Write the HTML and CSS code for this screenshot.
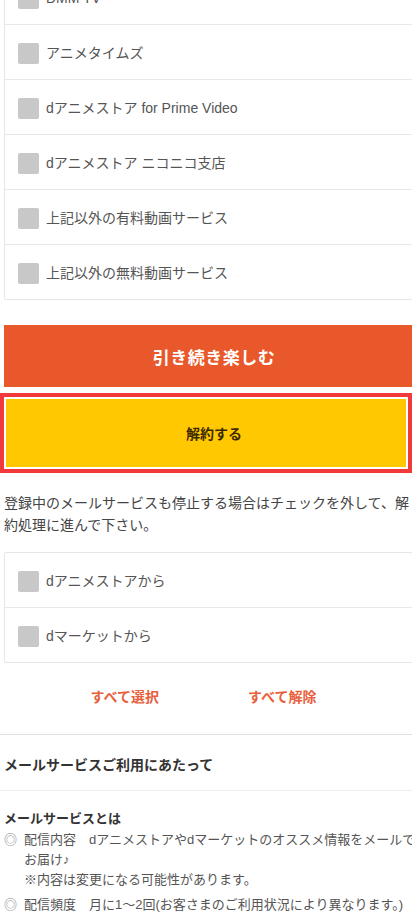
FILE: index.html
```html
<!DOCTYPE html>
<html lang="ja">
<head>
<meta charset="utf-8">
<meta name="viewport" content="width=device-width, initial-scale=1">
<title>解約</title>
<link rel="stylesheet" href="styles.css">
</head>
<body>
<div class="page">
  <ul class="checklist checklist-top">
    <li class="check-row"><span class="box"></span><span class="label">DMM TV</span></li>
    <li class="check-row"><span class="box"></span><span class="label">アニメタイムズ</span></li>
    <li class="check-row"><span class="box"></span><span class="label">dアニメストア for Prime Video</span></li>
    <li class="check-row"><span class="box"></span><span class="label">dアニメストア ニコニコ支店</span></li>
    <li class="check-row"><span class="box"></span><span class="label">上記以外の有料動画サービス</span></li>
    <li class="check-row"><span class="box"></span><span class="label">上記以外の無料動画サービス</span></li>
  </ul>

  <div class="actions">
    <button class="btn btn-continue" type="button">引き続き楽しむ</button>
    <div class="cancel-wrap">
      <button class="btn btn-cancel" type="button">解約する</button>
      <span class="highlight"></span>
    </div>
  </div>

  <p class="note">登録中のメールサービスも停止する場合はチェックを外して、解約処理に進んで下さい。</p>

  <ul class="checklist checklist-mail">
    <li class="check-row"><span class="box"></span><span class="label">dアニメストアから</span></li>
    <li class="check-row"><span class="box"></span><span class="label">dマーケットから</span></li>
  </ul>

  <div class="select-links">
    <a class="select-link" href="#">すべて選択</a>
    <a class="select-link" href="#">すべて解除</a>
  </div>

  <section class="mail-info">
    <h2 class="info-title">メールサービスご利用にあたって</h2>
    <div class="info-body">
      <h3 class="info-subtitle">メールサービスとは</h3>
      <ul class="info-list">
        <li class="info-item"><span class="mark">◎</span><div class="item-text"><span class="item-label">配信内容</span>dアニメストアやdマーケットのオススメ情報をメールでお届け♪<br>※内容は変更になる可能性があります。</div></li>
        <li class="info-item"><span class="mark">◎</span><div class="item-text"><span class="item-label">配信頻度</span>月に1～2回(お客さまのご利用状況により異なります。)</div></li>
      </ul>
    </div>
  </section>
</div>
</body>
</html>
```

FILE: styles.css
```css
html, body {
  margin: 0;
  padding: 0;
  overflow-x: hidden;
  background: #ffffff;
}

body {
  font-family: "Liberation Sans", "Noto Sans CJK JP", sans-serif;
  color: #444444;
  -webkit-font-smoothing: antialiased;
}

.page {
  width: 428px;
}

.checklist {
  list-style: none;
  margin: 0 4px;
  padding: 0;
  border: 1px solid #e6e6e6;
  border-radius: 2px;
}

.checklist-top {
  margin-top: -31px;
}

.check-row {
  box-sizing: border-box;
  height: 55px;
  display: flex;
  align-items: center;
  padding: 2px 0 0 13px;
  border-bottom: 1px solid #e8e8e8;
}

.check-row:last-child {
  height: 54px;
  border-bottom: none;
}

.box {
  width: 21px;
  height: 21px;
  border-radius: 2px;
  background: #c8c8c8;
  flex: none;
}

.label {
  margin-left: 7px;
  font-size: 14px;
  line-height: 20px;
  color: #555555;
  white-space: nowrap;
}

.actions {
  margin: 25px 4px 0;
  display: flex;
  flex-direction: column;
}

.btn {
  display: block;
  width: 100%;
  border: none;
  margin: 0;
  padding: 0;
  font-family: inherit;
  cursor: pointer;
}

.btn-continue {
  height: 62px;
  background: #e8582a;
  color: #ffffff;
  font-size: 17px;
  font-weight: 700;
  letter-spacing: 0.5px;
}

.cancel-wrap {
  position: relative;
  margin-top: 10px;
}

.btn-cancel {
  height: 72px;
  background: #ffc800;
  color: #3a2800;
  font-size: 14px;
  font-weight: 700;
}

.highlight {
  position: absolute;
  left: -4px;
  top: -4px;
  width: 412px;
  height: 80px;
  box-sizing: border-box;
  border: 4px solid #f23a3a;
  box-shadow: inset 0 0 0 2px #ffffff;
  pointer-events: none;
}

.note {
  margin: 23px 12px 0 4px;
  font-size: 14px;
  line-height: 22px;
  color: #444444;
}

.checklist-mail {
  margin-top: 16px;
}

.select-links {
  display: flex;
  justify-content: center;
  gap: 89px;
  padding: 24px 21px 27px 0;
  border-bottom: 1px solid #e2e2e2;
}

.select-link {
  font-size: 14px;
  line-height: 20px;
  font-weight: 700;
  color: #e8603a;
  text-decoration: none;
}

.mail-info {
  margin: 0;
}

.info-title {
  margin: 0;
  padding: 20px 4px 15px;
  font-size: 14px;
  line-height: 20px;
  font-weight: 700;
  color: #333333;
  border-bottom: 1px solid #eeeeee;
}

.info-body {
  padding: 18px 4px 0;
}

.info-subtitle {
  margin: 0 0 1px;
  font-size: 13px;
  line-height: 20px;
  font-weight: 700;
  color: #333333;
}

.info-list {
  list-style: none;
  margin: 0;
  padding: 0;
  display: flex;
  flex-direction: column;
  gap: 5px;
}

.info-item {
  display: flex;
  font-size: 13px;
  line-height: 20px;
  color: #555555;
}

.mark {
  flex: none;
  width: 20px;
  color: #888888;
}

.item-text {
  flex: 1;
}

.item-label {
  display: inline-block;
  width: 5em;
}
```
